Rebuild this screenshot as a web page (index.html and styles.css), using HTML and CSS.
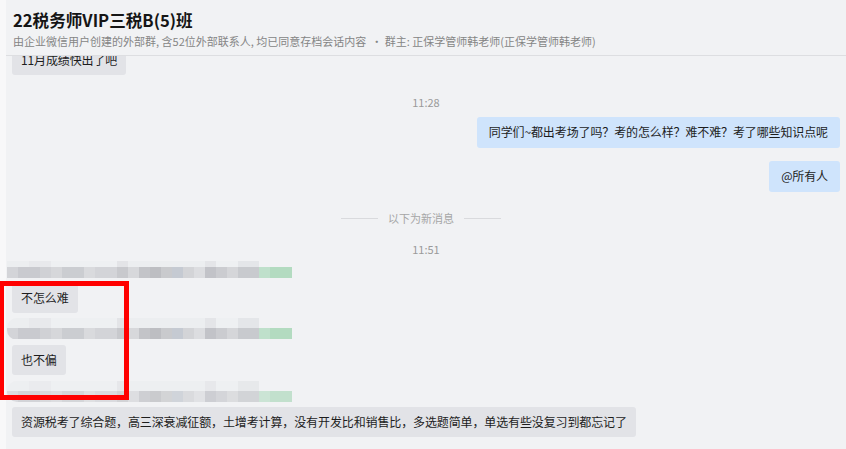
FILE: index.html
```html
<!DOCTYPE html>
<html>
<head>
    <meta charset="UTF-8" />
    <title>22税务师VIP三税B(5)班</title>
    <link rel="stylesheet" href="styles.css">
</head>
<body>
    <div class="page">
        <div class="header">
            <div class="title">22税务师VIP三税B(5)班</div>
            <div class="subtitle">由企业微信用户创建的外部群, 含52位外部联系人, 均已同意存档会话内容 &nbsp;· 群主: 正保学管师韩老师(正保学管师韩老师)</div>
        </div>

        <div class="chat">
            <div class="msg left first"><span class="bubble">11月成绩快出了吧</span></div>

            <div class="time t1">11:28</div>

            <div class="msg right m-blue"><span class="bubble mine">同学们~都出考场了吗？考的怎么样？难不难？考了哪些知识点呢</span></div>
            <div class="msg right m-at"><span class="bubble mine">@所有人</span></div>

            <div class="divider"><span class="line"></span><span class="divider-text">以下为新消息</span><span class="line"></span></div>

            <div class="time t2">11:51</div>

            <div class="blur b1"></div>
            <div class="msg left m-after"><span class="bubble">不怎么难</span></div>
            <div class="blur b2"></div>
            <div class="msg left m-after"><span class="bubble">也不偏</span></div>
            <div class="blur b3"></div>
            <div class="msg left m-after"><span class="bubble">资源税考了综合题，高三深衰减征额，土增考计算，没有开发比和销售比，多选题简单，单选有些没复习到都忘记了</span></div>
        </div>
    </div>

    <div class="mark"></div>
</body>
</html>
```

FILE: styles.css
```css
body {
    margin: 0;
    position: relative;
    background-color: #f1f2f4;
    font-family: "Noto Sans CJK SC", "Noto Sans", sans-serif;
}

.page {
    height: 449px;
    overflow: hidden;
    display: flex;
    flex-direction: column;
    border-left: 6px solid #f8f8f9;
    background-color: #f1f2f4;
}

.header {
    position: relative;
    z-index: 1;
    padding: 9px 7px 6px 7px;
    background-color: #f1f2f4;
    border-bottom: 1px solid #dddee1;
}

.title {
    font-size: 16.6px;
    font-weight: bold;
    line-height: 22px;
    color: #151515;
}

.subtitle {
    margin-top: 2px;
    font-size: 11px;
    line-height: 16px;
    color: #858585;
    white-space: nowrap;
}

.chat {
    flex: 1;
    overflow: hidden;
    padding: 0 6px;
    display: flex;
    flex-direction: column;
}

.msg {
    display: flex;
}

.msg.right {
    justify-content: flex-end;
}

.bubble {
    font-size: 12px;
    line-height: 16px;
    letter-spacing: -0.12px;
    padding: 7px 9px;
    border-radius: 3px;
    background-color: #e2e3e7;
    color: #1d1d1d;
    white-space: nowrap;
}

.bubble.mine {
    background-color: #cfe4fc;
    padding: 7px 12px 8px 12px;
}

.first {
    margin-top: -11px;
}

.time {
    text-align: center;
    font-size: 11px;
    line-height: 16px;
    color: #9a9a9a;
}

.t1 {
    margin-top: 19px;
}

.t2 {
    margin-top: 15px;
}

.m-blue {
    margin-top: 7px;
}

.m-at {
    margin-top: 13px;
}

.divider {
    margin-top: 18px;
    display: flex;
    justify-content: center;
    align-items: center;
    gap: 10px;
    padding-right: 10px;
}

.divider .line {
    width: 37px;
    height: 1px;
    background-color: #d9dadd;
}

.divider-text {
    font-size: 11px;
    line-height: 16px;
    color: #a6a6a6;
}

.m-after {
    margin-top: 5px;
}

/* pixelated sender names */
.blur {
    margin-left: -5px;
    width: 285px;
    height: 17px;
    background-repeat: no-repeat;
    background-image:
        linear-gradient(to right,
            #d3d4d8 0, #d3d4d8 11px,
            #c9cacf 11px, #c9cacf 33px,
            #d0d1d5 33px, #d0d1d5 44px,
            #d6d7da 44px, #d6d7da 55px,
            #cbcdd1 55px, #cbcdd1 77px,
            #d9dadd 77px, #d9dadd 88px,
            #d3d4d8 88px, #d3d4d8 110px,
            #c8c9cd 110px, #c8c9cd 121px,
            #d7d8db 121px, #d7d8db 132px,
            #c3c4c8 132px, #c3c4c8 143px,
            #bdbec2 143px, #bdbec2 154px,
            #c9cacd 154px, #c9cacd 165px,
            #c5cad2 165px, #c5cad2 176px,
            #d3d4d7 176px, #d3d4d7 187px,
            #dcdde0 187px, #dcdde0 198px,
            #c2c3c8 198px, #c2c3c8 209px,
            #cbccd0 209px, #cbccd0 220px,
            #d5d6d9 220px, #d5d6d9 231px,
            #c8cace 231px, #c8cace 252px,
            #bfe0cb 252px, #bfe0cb 263px,
            #b3dbc0 263px, #b3dbc0 285px),
        linear-gradient(to right,
            #eceef0 0, #eceef0 22px,
            #e8e9ec 22px, #e8e9ec 44px,
            #eef0f2 44px, #eef0f2 110px,
            #e3e4e7 110px, #e3e4e7 121px,
            #eceef0 121px, #eceef0 198px,
            #e4e5e8 198px, #e4e5e8 209px,
            #eef0f2 209px, #eef0f2 231px,
            #e4e6e9 231px, #e4e6e9 252px,
            #f1f2f4 252px, #f1f2f4 285px);
    background-size: 285px 11px, 285px 6px;
    background-position: 0 6px, 0 0;
}

.b1 {
    margin-top: 4px;
}

.b2 {
    margin-top: 5px;
    height: 22px;
    border-radius: 10px 0 0 10px;
    background-size: 285px 11px, 285px 11px;
    background-position: 0 10px, 0 0;
}

.b3 {
    margin-top: 6px;
    width: 297px;
    height: 21px;
    border-radius: 10px;
    background-size: 285px 11px, 285px 10px;
    background-position: 0 10px, 0 0;
    opacity: 0.75;
}

/* red highlight box drawn over the chat */
.mark {
    position: absolute;
    left: 0;
    top: 281px;
    width: 129px;
    height: 119px;
    box-sizing: border-box;
    border: 5px solid #ff0000;
    border-left-width: 4px;
    z-index: 2;
}
```
